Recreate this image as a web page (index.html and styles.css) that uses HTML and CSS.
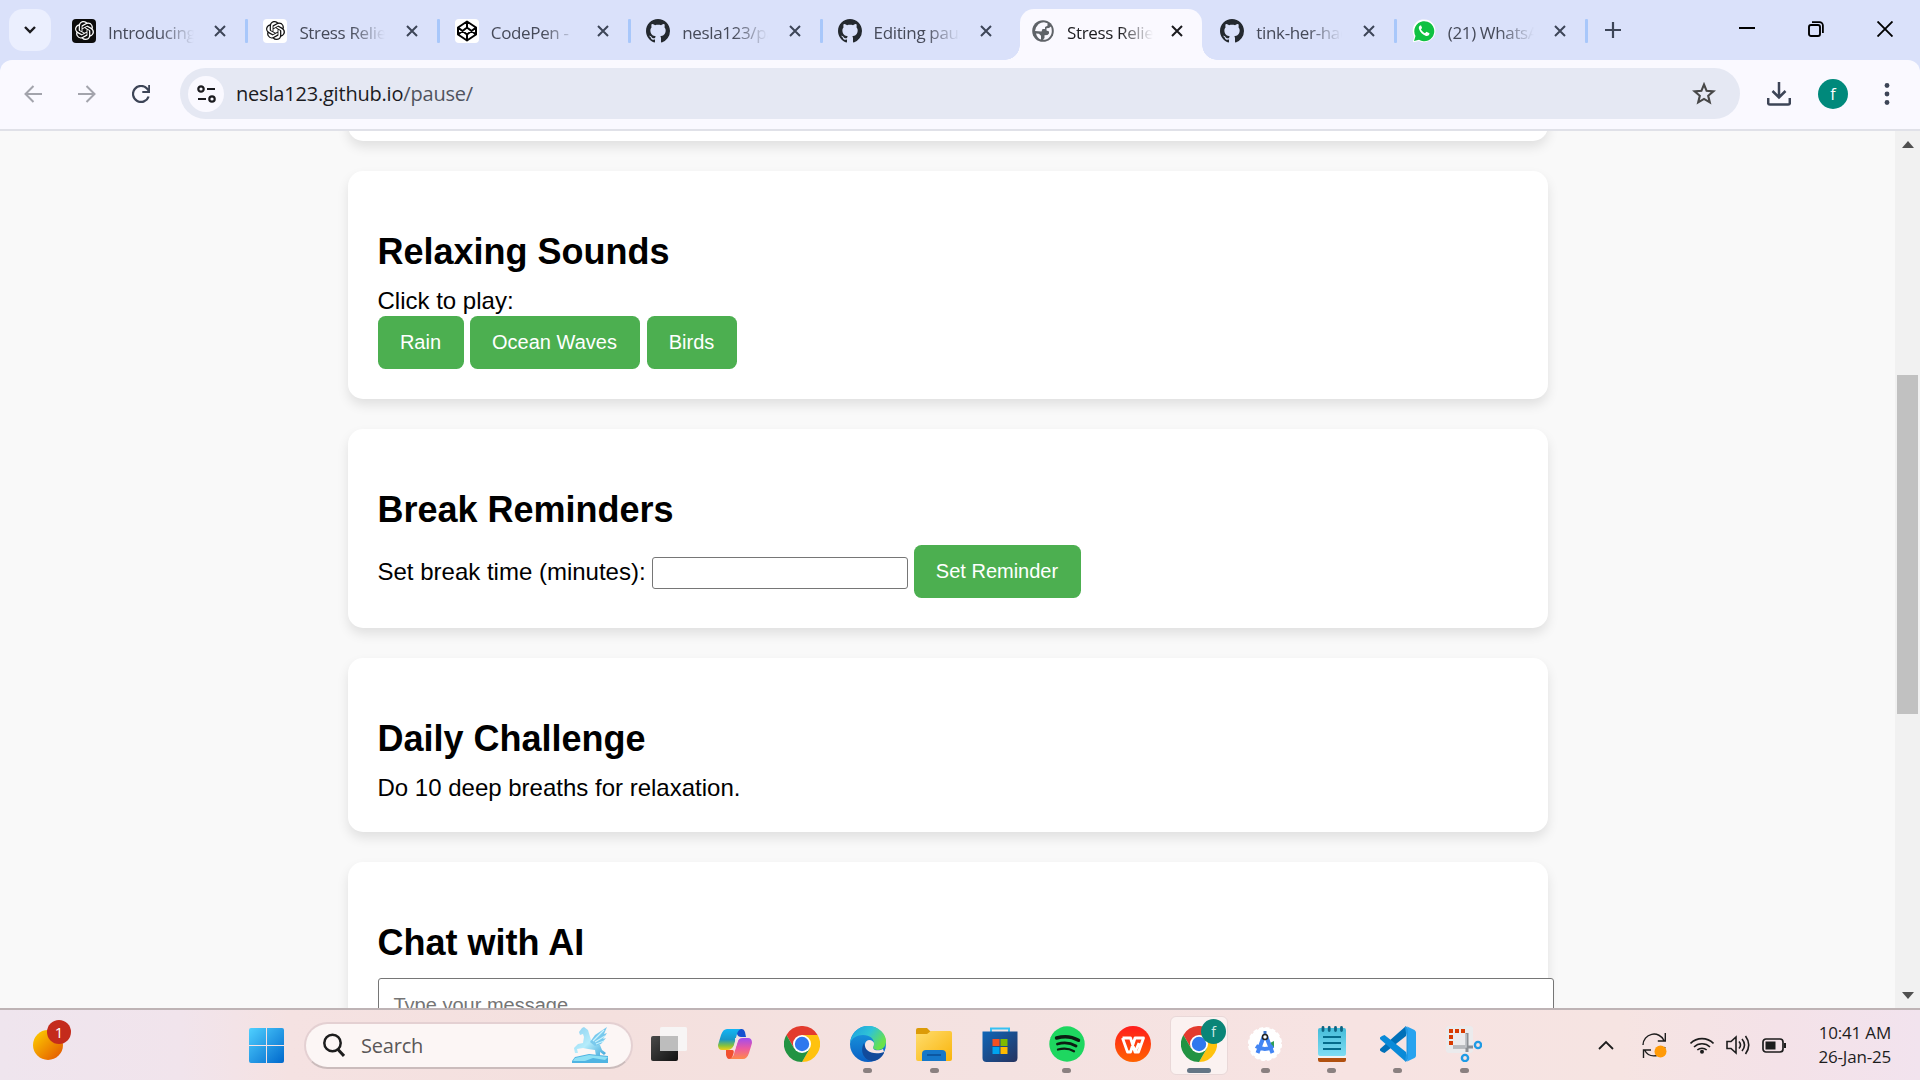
FILE: index.html
```html
<!DOCTYPE html>
<html lang="en">
<head>
<meta charset="utf-8">
<title>Stress Relief</title>
<link rel="stylesheet" href="styles.css">
</head>
<body>
<svg class="defs" aria-hidden="true">
  <defs>
    <linearGradient id="win" x1="0" y1="0" x2="1" y2="1"><stop offset="0" stop-color="#4fd0ff"/><stop offset="1" stop-color="#0068cc"/></linearGradient>
    <linearGradient id="sun" x1="0" y1="0" x2="1" y2="1"><stop offset="0" stop-color="#ffd400"/><stop offset="1" stop-color="#e25000"/></linearGradient>
    <linearGradient id="ice" x1="0" y1="0" x2="1" y2="1"><stop offset="0" stop-color="#8ed0f0"/><stop offset=".5" stop-color="#b5ecfb"/><stop offset="1" stop-color="#3ea6da"/></linearGradient>
    <linearGradient id="dark" x1="0" y1="0" x2="1" y2="1"><stop offset="0" stop-color="#4a4a4a"/><stop offset="1" stop-color="#111"/></linearGradient>
    <linearGradient id="copA" x1="0" y1="0" x2="0" y2="1"><stop offset="0" stop-color="#12b5f5"/><stop offset=".5" stop-color="#1897c8"/><stop offset=".8" stop-color="#8ac33a"/><stop offset="1" stop-color="#f3cf17"/></linearGradient>
    <linearGradient id="copB" x1="0" y1="0" x2="0" y2="1"><stop offset="0" stop-color="#a14cf0"/><stop offset=".5" stop-color="#ec5aa0"/><stop offset="1" stop-color="#ff8a4a"/></linearGradient>
    <linearGradient id="edgeA" x1="0" y1="0" x2="1" y2=".5"><stop offset="0" stop-color="#1b9de2"/><stop offset=".55" stop-color="#2fc3d6"/><stop offset="1" stop-color="#69e24b"/></linearGradient>
    <linearGradient id="edgeB" x1="0" y1="0" x2="0" y2="1"><stop offset="0" stop-color="#1b9fe0"/><stop offset="1" stop-color="#0a5fc4"/></linearGradient>
    <linearGradient id="fold" x1="0" y1="0" x2="1" y2="1"><stop offset="0" stop-color="#ffdd6e"/><stop offset="1" stop-color="#f9b40b"/></linearGradient>
    <linearGradient id="store" x1="0" y1="0" x2="1" y2="1"><stop offset="0" stop-color="#0f66b8"/><stop offset="1" stop-color="#26335f"/></linearGradient>
    <linearGradient id="wps" x1="0" y1="0" x2="0" y2="1"><stop offset="0" stop-color="#ff1d1d"/><stop offset="1" stop-color="#ff6200"/></linearGradient>
    <linearGradient id="note" x1="0" y1="0" x2="0" y2="1"><stop offset="0" stop-color="#45bcd9"/><stop offset="1" stop-color="#7fdcf2"/></linearGradient>
    <symbol id="close" viewBox="0 0 12 12"><path d="M1 1 11 11M11 1 1 11" fill="none" stroke="currentColor" stroke-width="2"/></symbol>
    <symbol id="github" viewBox="0 0 16 16"><path fill="#24292f" d="M8 0C3.58 0 0 3.58 0 8c0 3.54 2.29 6.53 5.47 7.59.4.07.55-.17.55-.38 0-.19-.01-.82-.01-1.49-2.01.37-2.53-.49-2.69-.94-.09-.23-.48-.94-.82-1.13-.28-.15-.68-.52-.01-.53.63-.01 1.08.58 1.23.82.72 1.21 1.87.87 2.33.66.07-.52.28-.87.51-1.07-1.78-.2-3.64-.89-3.64-3.95 0-.87.31-1.59.82-2.15-.08-.2-.36-1.02.08-2.12 0 0 .67-.21 2.2.82.64-.18 1.32-.27 2-.27s1.36.09 2 .27c1.53-1.04 2.2-.82 2.2-.82.44 1.1.16 1.92.08 2.12.51.56.82 1.27.82 2.15 0 3.07-1.87 3.75-3.65 3.95.29.25.54.73.54 1.48 0 1.07-.01 1.93-.01 2.2 0 .21.15.46.55.38A8.01 8.01 0 0 0 16 8c0-4.42-3.58-8-8-8z"/></symbol>
    <symbol id="openai" viewBox="0 0 24 24"><path fill="currentColor" d="M22.2819 9.8211a5.9847 5.9847 0 0 0-.5157-4.9108 6.0462 6.0462 0 0 0-6.5098-2.9A6.0651 6.0651 0 0 0 4.9807 4.1818a5.9847 5.9847 0 0 0-3.9977 2.9 6.0462 6.0462 0 0 0 .7427 7.0966 5.98 5.98 0 0 0 .511 4.9107 6.051 6.051 0 0 0 6.5146 2.9001A5.9847 5.9847 0 0 0 13.2599 24a6.0557 6.0557 0 0 0 5.7718-4.2058 5.9894 5.9894 0 0 0 3.9977-2.9001 6.0557 6.0557 0 0 0-.7475-7.0729zm-9.022 12.6081a4.4755 4.4755 0 0 1-2.8764-1.0408l.1419-.0804 4.7783-2.7582a.7948.7948 0 0 0 .3927-.6813v-6.7369l2.02 1.1686a.071.071 0 0 1 .038.052v5.5826a4.504 4.504 0 0 1-4.4945 4.4944zm-9.6607-4.1254a4.4708 4.4708 0 0 1-.5346-3.0137l.142.0852 4.783 2.7582a.7712.7712 0 0 0 .7806 0l5.8428-3.3685v2.3324a.0804.0804 0 0 1-.0332.0615L9.74 19.9502a4.4992 4.4992 0 0 1-6.1408-1.6464zM2.3408 7.8956a4.485 4.485 0 0 1 2.3655-1.9728V11.6a.7664.7664 0 0 0 .3879.6765l5.8144 3.3543-2.0201 1.1685a.0757.0757 0 0 1-.071 0l-4.8303-2.7865A4.504 4.504 0 0 1 2.3408 7.872zm16.5963 3.8558L13.1038 8.364 15.1192 7.2a.0757.0757 0 0 1 .071 0l4.8303 2.7913a4.4944 4.4944 0 0 1-.6765 8.1042v-5.6772a.79.79 0 0 0-.407-.667zm2.0107-3.0231l-.142-.0852-4.7735-2.7818a.7759.7759 0 0 0-.7854 0L9.409 9.2297V6.8974a.0662.0662 0 0 1 .0284-.0615l4.8303-2.7866a4.4992 4.4992 0 0 1 6.6802 4.66zM8.3065 12.863l-2.02-1.1638a.0804.0804 0 0 1-.038-.0567V6.0742a4.4992 4.4992 0 0 1 7.3757-3.4537l-.142.0805L8.704 5.459a.7948.7948 0 0 0-.3927.6813zm1.0976-2.3654l2.602-1.4998 2.6069 1.4998v2.9994l-2.5974 1.4997-2.6067-1.4997Z"/></symbol>
    <symbol id="chrome" viewBox="0 0 36 36">
      <path fill="#e33b2e" d="M18 18V9h15.6A18 18 0 0 0 2.4 9l7.8 13.5z"/>
      <path fill="#ffc20e" d="M18 18V9h15.6A18 18 0 0 1 18 36l7.8-13.5z"/>
      <path fill="#229342" d="M18 18l7.8 4.5L18 36A18 18 0 0 1 2.4 9l7.8 13.5z"/>
      <circle cx="18" cy="18" r="9" fill="#fff"/><circle cx="18" cy="18" r="7.2" fill="#2f78ee"/>
    </symbol>
  </defs>
</svg>

<header class="tabstrip">
  <button class="tab-search"><svg width="12" height="8" viewBox="0 0 12 8"><path d="M1 1l5 5 5-5" fill="none" stroke="#1b1b1f" stroke-width="2.4"/></svg></button>
  <nav class="tabs">
    <div class="tab"><span class="favicon ai-dark"><svg width="19" height="19"><use href="#openai"/></svg></span><span class="title">Introducing</span><svg class="close"><use href="#close"/></svg></div>
    <div class="tab"><span class="favicon ai-light"><svg width="19" height="19"><use href="#openai"/></svg></span><span class="title">Stress Relief</span><svg class="close"><use href="#close"/></svg></div>
    <div class="tab"><span class="favicon ai-light"><svg width="22" height="22" viewBox="0 0 22 22"><path d="M11 1.5 20 7.5v7l-9 6-9-6v-7zM11 1.5v6M11 14.500v6M2 7.500l9 7 9-7M2 14.500l9-7 9 7" fill="none" stroke="#000" stroke-width="2" stroke-linejoin="round"/></svg></span><span class="title">CodePen -</span><svg class="close"><use href="#close"/></svg></div>
    <div class="tab"><svg class="favicon"><use href="#github"/></svg><span class="title">nesla123/pause</span><svg class="close"><use href="#close"/></svg></div>
    <div class="tab before"><svg class="favicon"><use href="#github"/></svg><span class="title">Editing pause</span><svg class="close"><use href="#close"/></svg></div>
    <div class="tab active"><svg class="favicon" viewBox="0 0 24 24"><circle cx="11" cy="12" r="10.800" fill="#5f6368"/><path d="M12 3.300c-2 0-4 .7-5.600 2L4 8.500l-1 3.500 6.500.5 1-2.500h2.500V8l2.500-1.300V4.200zM19 7.500l-2 1.500-2.500.2v2.300l2.500 1v2l-1.500 1.500-3 .2V19l-1.500 1.800c5 .2 8.800-3.700 8.800-8.600 0-1.700-.2-3.300-.8-4.700zM4 14.500l3 .2 2 2v3.800c-2.600-.8-4.400-3-5-6z" fill="#faf9ff"/></svg><span class="title">Stress Relief</span><svg class="close"><use href="#close"/></svg></div>
    <div class="tab"><svg class="favicon"><use href="#github"/></svg><span class="title">tink-her-hack</span><svg class="close"><use href="#close"/></svg></div>
    <div class="tab"><svg class="favicon" viewBox="0 0 24 24"><path d="M.5 23.500l1.700-6A11.400 11.400 0 1 1 7 22z" fill="#fff"/><path d="M2 22l1.500-5A10 10 0 1 1 7 20.700z" fill="#10c142"/><path d="M8.200 6.500c-1.200.6-1.700 2-1.200 3.600 1 3.200 3.700 5.900 7 6.800 1.600.4 3-.4 3.400-1.800l.1-.9-3-1.500-1.500 1.500c-1.900-.8-3.200-2-4.100-3.900l1.200-1.400-1-2.500z" fill="#fff"/></svg><span class="title">(21) WhatsApp</span><svg class="close"><use href="#close"/></svg></div>
  </nav>
  <svg class="newtab" width="16" height="16" viewBox="0 0 16 16"><path d="M8 0v16M0 8h16" stroke="#3d4557" stroke-width="2.200"/></svg>
  <div class="winctl">
    <svg width="16" height="16" viewBox="0 0 16 16"><path d="M0 7h16" stroke="#000" stroke-width="2"/></svg>
    <svg width="16" height="16" viewBox="0 0 16 16"><rect x="1" y="4" width="11" height="11" rx="2" fill="none" stroke="#000" stroke-width="1.900"/><path d="M4 1.200h7.500a3.400 3.400 0 0 1 3.400 3.400V12" fill="none" stroke="#000" stroke-width="1.800"/></svg>
    <svg width="16" height="16" viewBox="0 0 16 16"><path d="M.5.5l15 15M15.500.5l-15 15" stroke="#000" stroke-width="1.900"/></svg>
  </div>
</header>

<div class="toolbar-back"><div class="toolbar">
  <svg class="nav" viewBox="0 0 18 18"><path d="M18 9H1.500M9.500 1 1.500 9l8 8" fill="none" stroke="#a3a4ac" stroke-width="2"/></svg>
  <svg class="nav" viewBox="0 0 18 18"><path d="M0 9h16.500M8.500 1l8 8-8 8" fill="none" stroke="#a3a4ac" stroke-width="2"/></svg>
  <svg class="nav" viewBox="0 0 18 18"><path d="M16.600 11.500A8 8 0 1 1 15 3.600L17 6M17.300 0v7h-7" fill="none" stroke="#3d4557" stroke-width="2.200"/></svg>
  <div class="omnibox">
    <span class="tune"><svg width="19" height="18" viewBox="0 0 19 18"><g fill="none" stroke="#1b1b1f" stroke-width="2.200"><circle cx="4" cy="4" r="2.700"/><path d="M10 4h8M1 14h8"/><circle cx="15" cy="14" r="2.700"/></g></svg></span>
    <span class="url">nesla123.github.io<i>/pause/</i></span>
    <svg class="star" width="24" height="23" viewBox="0 0 24 23"><path d="M12 2.500l2.600 6.300 6.800.6-5.200 4.400 1.600 6.600-5.800-3.500-5.800 3.500 1.600-6.600-5.200-4.400 6.800-.6z" fill="none" stroke="#474747" stroke-width="2.100"/></svg>
  </div>
  <svg class="download" width="24" height="24" viewBox="0 0 24 24"><path d="M12 0v15M5.500 9l6.500 6.500L18.500 9M1.200 16v5q0 1.600 1.600 1.600h18.400q1.600 0 1.600-1.600v-5" fill="none" stroke="#3d4557" stroke-width="2.500"/></svg>
  <span class="avatar">f</span>
  <svg class="dots" width="6" height="22" viewBox="0 0 6 22"><g fill="#3d4557"><circle cx="3" cy="2.500" r="2.400"/><circle cx="3" cy="11" r="2.400"/><circle cx="3" cy="19.500" r="2.400"/></g></svg>
</div></div>

<main class="viewport">
  <div class="page">
    <section class="card peek"></section>
    <section class="card">
      <h2>Relaxing Sounds</h2>
      <p>Click to play:</p>
      <div class="row"><button class="btn rain">Rain</button><button class="btn ocean">Ocean Waves</button><button class="btn birds">Birds</button></div>
    </section>
    <section class="card">
      <h2>Break Reminders</h2>
      <div class="row"><label for="mins">Set break time (minutes):</label><input id="mins" class="minutes" type="text"><button class="btn reminder">Set Reminder</button></div>
    </section>
    <section class="card">
      <h2>Daily Challenge</h2>
      <p>Do 10 deep breaths for relaxation.</p>
    </section>
    <section class="card">
      <h2>Chat with AI</h2>
      <textarea class="chat" placeholder="Type your message..."></textarea>
    </section>
  </div>
  <aside class="scrollbar">
    <svg width="12" height="7" viewBox="0 0 12 7"><path d="M0 7l6-7 6 7z" fill="#505050"/></svg>
    <div class="thumb"></div>
    <svg width="12" height="7" viewBox="0 0 12 7"><path d="M0 0l6 7 6-7z" fill="#505050"/></svg>
  </aside>
</main>

<footer class="taskbar">
  <div class="weather"><svg width="30" height="30"><circle cx="15" cy="15" r="15" fill="url(#sun)"/></svg><span class="badge">1</span></div>
  <svg class="start" width="35" height="35" viewBox="0 0 35 35"><path d="M2 0h15v17H0V2q0-2 2-2zM18 0h15q2 0 2 2v15H18zM0 18h17v17H2q-2 0-2-2zM18 18h17v15q0 2-2 2H18z" fill="url(#win)"/></svg>
  <div class="search">
    <svg width="22" height="24" viewBox="0 0 22 24"><circle cx="9.500" cy="10" r="8.200" fill="none" stroke="#1d1d1d" stroke-width="2.500"/><path d="M15 16.500l6 6.500" stroke="#1d1d1d" stroke-width="3"/></svg>
    <span>Search</span>
    <svg class="pegasus" width="36" height="36" viewBox="0 0 36 36"><path d="M0 34l3-4 14-3 19 2v7H0z" fill="#4fb4e2"/><path d="M3 31l14-3 19 2-3 3-12-2-8 3H1z" fill="#8fe0f5"/><path d="M7 5l3-4 2-1 4 3 3 10 5 2 4 3 2 5 4 3-2 2-4-3v4h-4l-1-6-7-1-5-1-6 1 1 4H3l-1-5 4-4 5-1 1-6-1-3-3 1z" fill="url(#ice)"/><path d="M18 15l5-7 12-8-3 7 3-1-4 6 3-1-5 6-6 2z" fill="#79c9ed"/><path d="M21 14l11-11M23 15l10-6M24 17l8-3" stroke="#c9f2fd" stroke-width="1.300"/></svg>
  </div>
  <div class="apps">
    <div class="app"><svg viewBox="0 0 36 36"><rect x="0" y="10" width="27" height="25" rx="2" fill="url(#dark)"/><rect x="9" y="1" width="27" height="24" rx="1.500" fill="#f6f6f6" opacity=".92"/><path d="M9 10h18v15H9z" fill="#bdbdbd"/></svg></div>
    <div class="app"><svg viewBox="0 0 36 36"><path d="M20 3h5q2 0 3 3l1 5h-5q-3 0-4-3z" fill="#1550d0"/><path d="M10 3h14q-3 1-4 5l-3 11q-2 5-7 5H5q-4 0-4-5L4 9q2-6 6-6z" fill="url(#copA)"/><path d="M26 33H12q4-1 5-5l3-11q1-5 6-5h5q4 0 4 5l-3 10q-2 6-6 6z" fill="url(#copB)"/><path d="M9 24h6q3 0 1 5-1 4-4 4-2 0-3-4z" fill="#f1502f"/><path d="M18 12h4l-4 12h-3q4-7 3-12z" fill="#f5e2e4"/></svg></div>
    <div class="app"><svg><use href="#chrome"/></svg></div>
    <div class="app run"><svg viewBox="0 0 36 36"><circle cx="18" cy="18" r="18" fill="url(#edgeB)"/><path d="M0 17C2 6 9 0 18 0c11 0 18 8 18 15 0 6-4 9-8 9-3 0-5-1-5-2.500 0-1 1-1.500 1-4C24 13 20 9 13 9 7 9 2 12 0 17z" fill="url(#edgeA)"/><path d="M14 17c-5 9 1 18 9 18 5 0 9-4 11-8 0-1 0-1-1-1-9 3-18-1-19-9z" fill="#114a9b"/><path d="M19 14c-5 1-5 7-2 10 4 4 12 4 17 2l-1-3c-3 2-10 2-10-1.500 0-1 1-1 1-4 0-1.500-2-3.500-5-3.500z" fill="#f6e4e3"/></svg></div>
    <div class="app run"><svg viewBox="0 0 36 36"><path d="M0 4q0-2 2-2h9l4 4v5H0z" fill="#dc9b08"/><path d="M0 8h11l4-3h19q2 0 2 2v26q0 2-2 2H2q-2 0-2-2z" fill="url(#fold)"/><path d="M6 35V28q0-4 4-4h16q4 0 4 4v7z" fill="#1577c9"/><path d="M11 29h14" stroke="#0a4d93" stroke-width="1.500"/></svg></div>
    <div class="app"><svg viewBox="0 0 36 36"><path d="M9 8V2.500h18V8" fill="none" stroke="#36c1f3" stroke-width="2"/><path d="M.5 5.500h35V32q0 4-4 4h-27q-4 0-4-4z" fill="url(#store)"/><path d="M10.500 13h7v7h-7z" fill="#f25022"/><path d="M18.500 13h7v7h-7z" fill="#7fba00"/><path d="M10.500 21h7v7h-7z" fill="#00a4ef"/><path d="M18.500 21h7v7h-7z" fill="#ffb900"/></svg></div>
    <div class="app run"><svg viewBox="0 0 36 36"><circle cx="18" cy="18" r="17.700" fill="#1ed760"/><g fill="none" stroke="#0c1d12" stroke-linecap="round"><path d="M7.500 12q12-3.500 22 2.300" stroke-width="3.400"/><path d="M8.500 18q10-2.800 18.500 2" stroke-width="2.800"/><path d="M9 23.500q9-2.300 16 1.700" stroke-width="2.300"/></g></svg></div>
    <div class="app"><svg viewBox="0 0 36 36"><circle cx="18" cy="18" r="18" fill="url(#wps)"/><path d="M7.500 12h8l4.500 14 4-9M7.500 12l5 14h3L20 12h8.500l-5 14H20" fill="none" stroke="#fff" stroke-width="2.800" stroke-linejoin="round"/></svg></div>
    <div class="app run current"><svg><use href="#chrome"/></svg><span class="profile">f</span></div>
    <div class="app run"><svg viewBox="0 0 36 36"><circle cx="18" cy="18" r="16.200" fill="#fff" stroke="#fff" stroke-width="1.800" stroke-dasharray="4 2.360"/><path d="M23 17l4-2v6h-4z" fill="#2f9e56"/><path d="M17 10 10.500 27M19 10l6.500 17M9 20q9 6 17 0" fill="none" stroke="#4285f4" stroke-width="4"/><path d="M18 5v4" stroke="#3b71c8" stroke-width="3"/><circle cx="18" cy="11" r="2.500" fill="#fff" stroke="#222" stroke-width="1.500"/></svg></div>
    <div class="app run"><svg viewBox="0 0 36 36"><path d="M4 32h28v2q0 2-2 2H6q-2 0-2-2z" fill="#b1500f"/><path d="M4 28h28v4H4z" fill="#f4f2f0"/><path d="M6 2h24q2 0 2 2v24q0 2-2 2H6q-2 0-2-2V4q0-2 2-2z" fill="url(#note)"/><path d="M9 1.500v3M15.200 1.500v3M21.500 1.500v3M27.500 1.500v3" stroke="#0e6583" stroke-width="2.800" stroke-linecap="round"/><path d="M9 11h18M9 17h18M9 23h18" stroke="#056b8b" stroke-width="2"/></svg></div>
    <div class="app run"><svg viewBox="0 0 36 36"><path d="M26 0v10L4.500 27 2 26 0 24.500v-1.500z" fill="#0070b8"/><path d="M26 36V26L4.500 9 2 10 0 11.500V13z" fill="#0a8ad8"/><path d="M26 0l8.500 4q1.500 1 1.500 2.500v23q0 1.500-1.500 2.500L26 36q2-1 2-3V3q0-2-2-3z" fill="#28a3ef"/><path d="M25 1q3-1 3 2v30q0 3-3 2l1.500-9V10z" fill="#2098e4"/></svg></div>
    <div class="app run"><svg viewBox="0 0 36 36"><rect x="0" y="0" width="27" height="27" rx="3" fill="#ebebed"/><path d="M5 19V5h14" fill="none" stroke="#d83b01" stroke-width="4" stroke-dasharray="4 2"/><path d="M7 21h20M21 7v19" stroke="#8b8f94" stroke-width="3"/><path d="M7 21h13v-13" fill="none" stroke="#c5c8cb" stroke-width="1.500"/><circle cx="32" cy="19" r="3.100" fill="none" stroke="#1e9be5" stroke-width="2.400"/><circle cx="19" cy="32" r="3.100" fill="none" stroke="#1e9be5" stroke-width="2.400"/></svg></div>
  </div>
  <div class="tray">
    <svg width="16" height="10" viewBox="0 0 16 10"><path d="M1 9l7-7 7 7" fill="none" stroke="#1d1d1d" stroke-width="1.800"/></svg>
    <svg class="sync" width="25" height="25" viewBox="0 0 25 25"><path d="M1 12A11 11 0 0 1 22 7.500M23.300 0v8h-7.500M23 14A11 11 0 0 1 2.500 17M1.500 25v-8H9" fill="none" stroke="#1d1d1d" stroke-width="1.400"/><circle cx="18.500" cy="18.500" r="6" fill="#ff9a08"/></svg>
    <svg class="wifi" width="24" height="18" viewBox="0 0 24 18"><g fill="none" stroke="#1d1d1d" stroke-width="1.600"><path d="M.5 7.500a16 16 0 0 1 23 0M4 11a11.500 11.500 0 0 1 16 0M7.300 14a7 7 0 0 1 9.400 0"/></g><circle cx="12" cy="15.800" r="2" fill="#1d1d1d"/></svg>
    <svg class="sound" width="24" height="20" viewBox="0 0 24 20"><path d="M1 6.500h4L10 2v16l-5-4.500H1zM13 6.500q3 3.500 0 7M16 4q5 6 0 12M19.500 1q6.500 9 0 18" fill="none" stroke="#1d1d1d" stroke-width="1.600"/></svg>
    <svg class="battery" width="24" height="15" viewBox="0 0 24 15"><rect x="1" y="1" width="20" height="13" rx="3" fill="none" stroke="#1d1d1d" stroke-width="1.700"/><path d="M3.500 3.500h10v8h-10z" fill="#1d1d1d"/><path d="M22 5h2v5h-2z" fill="#1d1d1d"/></svg>
    <div class="clock"><span>10:41 AM</span><span>26-Jan-25</span></div>
  </div>
</footer>
</body>
</html>
```
FILE: styles.css
```css
* { box-sizing: border-box; }
body {
  margin: 0;
  width: 1920px;
  height: 1080px;
  overflow: hidden;
  display: flex;
  flex-direction: column;
  font-family: "Open Sans", "Noto Sans", sans-serif;
}
svg { display: block; flex: none; }
.defs { position: absolute; width: 0; height: 0; }
button { font: inherit; border: 0; padding: 0; }

/* Tab strip */
.tabstrip { flex: none; height: 60px; display: flex; background: #dae1fa; }
.tab-search {
  width: 42px; height: 42px; margin: 9px 6px 0 9px;
  display: grid; place-items: center;
  border-radius: 14px; background: #ebeffe;
}
.tabs { display: flex; }
.tab {
  position: relative; width: 191.4px; height: 60px;
  padding: 1px 22px 0 15px;
  display: flex; align-items: center;
  color: #464a59; font-size: 17px; letter-spacing: -0.35px;
}
.tab::after {
  content: ""; position: absolute; right: 0; top: 19px;
  width: 3px; height: 24px; border-radius: 1px; background: #a8c7fa;
}
.tab.before::after { display: none; }
.favicon { width: 24px; height: 24px; flex: none; border-radius: 4px; display: grid; place-items: center; z-index: 1; }
.ai-dark { background: #0c0c0c; color: #fff; }
.ai-light { background: #fff; color: #111; }
.title {
  width: 86px; margin-left: 12px; overflow: hidden; white-space: nowrap; z-index: 1; padding-top: 3px;
  -webkit-mask-image: linear-gradient(90deg, #000 60%, transparent 100%);
  mask-image: linear-gradient(90deg, #000 60%, transparent 100%);
}
.close { width: 12px; height: 12px; margin-left: auto; color: #3d4557; z-index: 1; }
.tab.active { color: #1b1b1f; padding-left: 18px; }
.tab.active .title { margin-left: 11px; }
.tab.active .close { color: #1b1b1f; }
.tab.active::before {
  content: ""; position: absolute; left: 6px; top: 9px; width: 182px; height: 51px;
  border-radius: 14px 14px 0 0; background: #faf9ff;
}
.tab.active::after {
  left: -9px; right: auto; top: 45px; width: 212px; height: 15px; border-radius: 0;
  background:
    radial-gradient(circle at 0 0, transparent 14.5px, #faf9ff 15px) left / 15px 15px no-repeat,
    radial-gradient(circle at 100% 0, transparent 14.5px, #faf9ff 15px) right / 15px 15px no-repeat;
}
.newtab { margin: 22px 0 0 17px; }
.winctl { margin: 21px 27px 0 auto; display: flex; gap: 53px; }

/* Toolbar */
.toolbar-back { flex: none; background: #dae1fa; }
.toolbar {
  height: 71px; padding: 0 30px 1px 24px;
  display: flex; align-items: center;
  background: #faf9ff; border-radius: 12px 12px 0 0;
  border-bottom: 2px solid #e0e1e8;
}
.nav { width: 18px; height: 18px; margin-right: 36px; }
.nav:nth-child(3) { margin-right: 30px; margin-left: 0; }
.omnibox {
  width: 1560px; height: 51px; padding: 0 24px 0 8px; margin-bottom: 1px;
  display: flex; align-items: center; border-radius: 26px; background: #e5e8f3;
}
.tune { width: 36px; height: 36px; border-radius: 50%; display: grid; place-items: center; background: #faf9ff; }
.url { margin-left: 12px; font-size: 20px; letter-spacing: -0.2px; color: #1b1b1f; }
.url i { font-style: normal; color: #50535e; }
.star { margin-left: auto; }
.download { margin-left: 27px; }
.avatar {
  width: 30px; height: 30px; margin-left: 27px; border-radius: 50%;
  display: grid; place-items: center; background: #00897b; color: #fff; font-size: 16px;
}
.dots { margin-left: 36px; }

/* Page */
.viewport {
  flex: none; height: 877px; overflow: hidden; display: flex; background: #f9f9f9;
  font-family: "Liberation Sans", Arial, sans-serif; font-size: 24px; color: #000;
}
.page { flex: 1; display: flex; flex-direction: column; align-items: center; gap: 30px; }
.card {
  flex: none; width: 1200px; padding: 30px; border-radius: 15px;
  background: #fff; box-shadow: 0 6px 12px rgba(0, 0, 0, .1);
}
.card.peek { height: 60px; margin-top: -50px; }
.card h2 { margin: 30px 0 15px; font-size: 36px; line-height: 41px; }
.card p { margin: 0; line-height: 28px; }
.row { display: flex; align-items: center; }
.row + .row, p + .row { margin-top: 1px; }
.btn { height: 53px; border-radius: 7.5px; background: #4caf50; color: #fff; font-size: 20px; }
.rain { width: 86px; margin-right: 6px; }
.ocean { width: 170px; margin-right: 7px; }
.birds { width: 90px; }
.row label { width: 274px; white-space: nowrap; }
.minutes { width: 256px; height: 32px; margin: 0 6px 0 0; border: 1px solid #767676; border-radius: 3px; position: relative; top: 1px; }
.reminder { width: 167px; }
.chat {
  display: block; width: 1176px; height: 90px; padding: 15px; resize: none;
  border: 1px solid #767676; border-radius: 3px; font: 20px "Liberation Sans", Arial, sans-serif;
}
.scrollbar {
  width: 25px; padding: 10px 0 9px; display: flex; flex-direction: column; align-items: center;
  justify-content: space-between; background: #f1f1f1;
}
.thumb { width: 21px; height: 339px; margin: 227px 0 auto; background: #c1c1c1; }

/* Taskbar */
.taskbar {
  flex: none; height: 72px; display: flex; align-items: center; border-top: 2px solid #beb3b5;
  background: linear-gradient(90deg, #efe5ee 0, #f1e4ec 180px, #f5e2e2 290px, #f4e0de 600px, #f4e2e1 1000px, #f7e3e2 1350px, #f6e4e2 1620px, #f4e2e8 1780px, #f2e3ee 1920px);
}
.weather { position: relative; width: 30px; margin-left: 33px; }
.badge {
  position: absolute; left: 14px; top: -10px; width: 24px; height: 24px; border-radius: 50%;
  display: grid; place-items: center; background: #c42b1c; color: #fff; font-size: 15px;
}
.start { margin-left: 186px; }
.search {
  width: 329px; height: 47px; margin: 0 0 0 20px; padding: 0 23px 0 17px;
  display: flex; align-items: center; gap: 16px; border-radius: 24px;
  border: 2px solid #e4d0d2; border-bottom-color: #cbbcbc; background: #fcf6f5;
  color: #5a5757; font-size: 20px; letter-spacing: -0.2px;
}
.pegasus { margin-left: auto; }
.apps { margin-left: 3px; height: 70px; display: grid; grid-template-columns: repeat(13, 66.25px); }
.app { position: relative; display: flex; justify-content: center; align-items: center; padding-bottom: 2px; }
.app svg { width: 36px; height: 36px; z-index: 1; }
.run::after {
  content: ""; position: absolute; bottom: 7px; width: 9px; height: 5px; border-radius: 3px; background: #8a8080; z-index: 1;
}
.current::after { width: 24px; background: #647585; }
.current::before {
  content: ""; position: absolute; top: 6px; width: 56px; height: 57px; border-radius: 6px;
  background: #fbf2f1; border: 1px solid #e9d8d8;
}
.profile {
  position: absolute; left: 35px; top: 9px; width: 25px; height: 25px; border-radius: 50%; z-index: 2;
  display: grid; place-items: center; background: #0a8577; color: #cfe9e5; font-size: 14px;
}
.tray { margin-left: auto; padding-right: 29px; display: flex; align-items: center; }
.sync { margin-left: 28px; }
.wifi { margin-left: 23px; }
.sound { margin-left: 12px; }
.battery { margin-left: 12px; }
.clock {
  width: 105px; display: flex; flex-direction: column; align-items: flex-end;
  font-size: 17px; line-height: 24px; color: #1d1d1d; letter-spacing: -0.2px;
}
```
